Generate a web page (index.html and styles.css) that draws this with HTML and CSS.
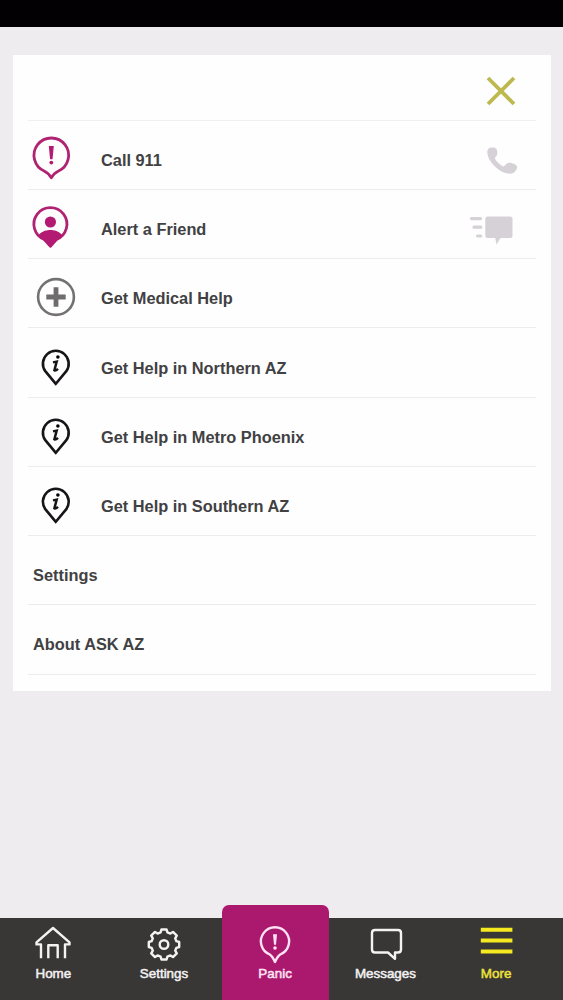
FILE: index.html
```html
<!DOCTYPE html>
<html lang="en">
<head>
<meta charset="utf-8">
<title>ASK AZ</title>
<link rel="stylesheet" href="styles.css">
</head>
<body>
<div class="screen">
  <div class="status"></div>
  <main class="content">
    <section class="card">
      <div class="head">
        <svg class="close" width="30" height="30" viewBox="0 0 30 30"><path d="M2 2L28 28M28 2L2 28"/></svg>
      </div>
      <div class="row">
        <span class="slot"><svg width="73" height="68" viewBox="0 0 73 68">
          <path class="magenta-line" d="M16.5 50.2A17.3 17.3 0 1 1 30.1 50.2C27 51.6 25.2 53.6 23.3 56.8C21.4 53.6 19.6 51.6 16.5 50.2Z"/>
          <path class="magenta-fill" d="M20.8 25H25.8L24.5 38.2H22.1Z"/><circle class="magenta-fill" cx="23.3" cy="41.6" r="1.9"/>
        </svg></span>
        <span class="label">Call 911</span>
        <svg class="side" width="50" height="68" viewBox="0 0 50 68"><path d="M20.2 28C21.8 26.3 26.6 26.1 28.2 27.7C29.6 29.5 29.5 33 28.7 34.6C27.9 36 26.6 36.4 27 37.8C28.6 41 31.8 43.7 35.2 45.4C36.8 45.6 37.5 42.9 39.5 42.2C42.5 41 47 43.1 49 45.2C49.8 46.8 47.8 50.4 45.8 51.8C43.3 53.2 39.2 53 36 51.6C28.5 48.3 21.6 41.3 19.8 34.5C19.2 32 18.9 29.5 20.2 28Z"/></svg>
      </div>
      <div class="row">
        <span class="slot"><svg width="73" height="68" viewBox="0 0 73 68">
          <path class="magenta-line" d="M22.4 56.2L16.4 49.5A16.5 16.5 0 1 1 28.4 49.5Z"/>
          <circle class="magenta-fill" cx="22.4" cy="32" r="5.6"/>
          <path class="magenta-fill" d="M10.5 45.2C15 40.4 19 40 22.4 40S29.8 40.4 34.3 45.2C32.5 48.6 30.2 49.8 27.5 51.5L22.4 57.5L17.3 51.5C14.6 49.8 12.3 48.6 10.5 45.2Z"/>
        </svg></span>
        <span class="label">Alert a Friend</span>
        <svg class="side" width="50" height="68" viewBox="0 0 50 68"><path d="M19.5 26.5H42Q44.5 26.5 44.5 29V45.5Q44.5 48 42 48H32.5L28.6 54.5L27.2 48H19.5Q17.3 48 17.3 45.5V29Q17.3 26.5 19.5 26.5Z"/><path class="speed" d="M3.5 28.6H12.5M6 37.2H12.8M9.5 46H12.8"/></svg>
      </div>
      <div class="row">
        <span class="slot"><svg width="73" height="68" viewBox="0 0 73 68"><circle class="gray-line" cx="28" cy="38" r="17.9"/><path class="plus" d="M18.3 38H37.7M28 28.3V47.7"/></svg></span>
        <span class="label">Get Medical Help</span>
      </div>
      <div class="row">
        <span class="slot"><svg width="73" height="68" viewBox="0 0 73 68"><path class="black-line" d="M27.8 54.8L17.3 42.2A12.9 12.9 0 1 1 38.3 42.2Z"/><circle cx="29.9" cy="28" r="1.8"/><path class="i" d="M25 33.4L28.7 32.6L26.4 41.3Q27.6 42.2 30 39.9"/></svg></span>
        <span class="label">Get Help in Northern AZ</span>
      </div>
      <div class="row">
        <span class="slot"><svg width="73" height="68" viewBox="0 0 73 68"><path class="black-line" d="M27.8 54.8L17.3 42.2A12.9 12.9 0 1 1 38.3 42.2Z"/><circle cx="29.9" cy="28" r="1.8"/><path class="i" d="M25 33.4L28.7 32.6L26.4 41.3Q27.6 42.2 30 39.9"/></svg></span>
        <span class="label">Get Help in Metro Phoenix</span>
      </div>
      <div class="row">
        <span class="slot"><svg width="73" height="68" viewBox="0 0 73 68"><path class="black-line" d="M27.8 54.8L17.3 42.2A12.9 12.9 0 1 1 38.3 42.2Z"/><circle cx="29.9" cy="28" r="1.8"/><path class="i" d="M25 33.4L28.7 32.6L26.4 41.3Q27.6 42.2 30 39.9"/></svg></span>
        <span class="label">Get Help in Southern AZ</span>
      </div>
      <div class="row plain"><span class="label">Settings</span></div>
      <div class="row plain"><span class="label">About ASK AZ</span></div>
    </section>
  </main>
  <nav class="nav">
    <div class="tab">
      <svg width="38" height="38" viewBox="0 0 38 38"><path d="M7 34.2V20.4H2.5V18.4L19 4L35.5 18.4V20.4H31V34.2M14.3 34.2V21.3H23.7V34.2"/></svg>
      <span>Home</span>
    </div>
    <div class="tab">
      <svg width="38" height="38" viewBox="0 0 38 38"><path d="M16.4 5.5H21.6L22.4 8.4L25.4 9.6L28 7.9L31.8 11.7L30.2 14.4L31.4 17.2L34.2 18V23L31.4 23.8L30.2 26.6L31.8 29.3L28 33.1L25.4 31.4L22.4 32.6L21.6 35.5H16.4L15.6 32.6L12.6 31.4L10 33.1L6.2 29.3L7.8 26.6L6.6 23.8L3.8 23V18L6.6 17.2L7.8 14.4L6.2 11.7L10 7.9L12.6 9.6L15.6 8.4Z"/><circle cx="19" cy="20.5" r="4.3"/></svg>
      <span>Settings</span>
    </div>
    <div class="tab panic">
      <svg width="38" height="42" viewBox="0 0 38 42"><path d="M13.8 30.5A14.1 14.1 0 1 1 24.2 30.5C21.8 32 20.7 34.3 19 38C17.3 34.3 16.2 32 13.8 30.5Z"/><path class="solid" d="M17 10.2H21L20 20.8H18Z"/><circle class="solid" cx="19" cy="24" r="1.8"/></svg>
      <span>Panic</span>
    </div>
    <div class="tab">
      <svg width="38" height="38" viewBox="0 0 38 38"><path d="M9 6H32Q35 6 35 9V25.5Q35 28.5 32 28.5H29V34.8L22 28.5H9Q6 28.5 6 25.5V9Q6 6 9 6Z"/></svg>
      <span>Messages</span>
    </div>
    <div class="tab active">
      <svg width="38" height="38" viewBox="0 0 38 38"><path d="M3.8 5.8H35.4M3.8 16.6H35.4M3.8 27.4H35.4"/></svg>
      <span>More</span>
    </div>
  </nav>
</div>
</body>
</html>
```
FILE: styles.css
```css
* { box-sizing: border-box; }
body { margin: 0; background: #eeecef; font-family: "Liberation Sans", Arial, sans-serif; }
.screen { height: 1000px; display: flex; flex-direction: column; overflow: hidden; }
.status { height: 27.4px; background: #020003; flex: none; }
.content { flex: 1; min-height: 0; padding: 27.2px 12.5px 0; }
.card { background: #fefefe; height: 636.6px; padding: 0 14.5px 0 15.5px; }
.head { height: 66.2px; border-bottom: 1px solid #f0eeef; display: flex; justify-content: flex-end; padding: 21px 20px 0 0; }
.close { fill: none; stroke: #bdb94f; stroke-width: 3.8; }
.row { height: 69.22px; border-bottom: 1px solid #ebecee; display: flex; align-items: center; }
.slot { width: 73px; height: 68px; flex: none; }
.slot svg { display: block; }
.label { flex: 1; padding-top: 10px; font-weight: bold; font-size: 16.35px; line-height: 20px; color: #414143; white-space: nowrap; }
.plain { padding-left: 5px; }
.magenta-line { fill: none; stroke: #b02373; stroke-width: 2.8; stroke-linejoin: round; }
.magenta-fill { fill: #b31a72; }
.gray-line { fill: none; stroke: #747173; stroke-width: 2.6; }
.plus { stroke: #6f6c6e; stroke-width: 4.8; }
.black-line { fill: none; stroke: #171518; stroke-width: 2.6; }
.i { fill: none; stroke: #171518; stroke-width: 2.5; }
.side { fill: #d5d1d6; margin-right: 18px; }
.speed { fill: none; stroke: #d5d1d6; stroke-width: 3.2; stroke-linecap: round; }
.nav { height: 82px; flex: none; background: #393736; display: grid; grid-template: 82px / repeat(5, 110.7px); padding-left: 2px; margin-left: -4px; align-items: end; }
.tab { height: 82px; padding-top: 6px; display: flex; flex-direction: column; align-items: center; color: #f4f2f3; font-size: 13.4px; line-height: 16px; -webkit-text-stroke: .5px currentColor; }
.tab svg { fill: none; stroke: #f4f2f3; stroke-width: 2.4; stroke-linejoin: round; flex: none; }
.tab span { margin-top: 4px; }
.tab .solid { fill: #ffe3f5; stroke: none; }
.panic { height: 95px; width: 107px; justify-self: center; margin-left: .8px; padding-top: 19px; background: #ab196f; border-radius: 7px 7px 0 0; color: #ffe3f5; }
.tab.panic svg { stroke: #ffe3f5; }
.tab.panic span { margin-top: 0; }
.tab.active { color: #ece33c; }
.tab.active svg { stroke: #f6e91f; stroke-width: 4; }
```
